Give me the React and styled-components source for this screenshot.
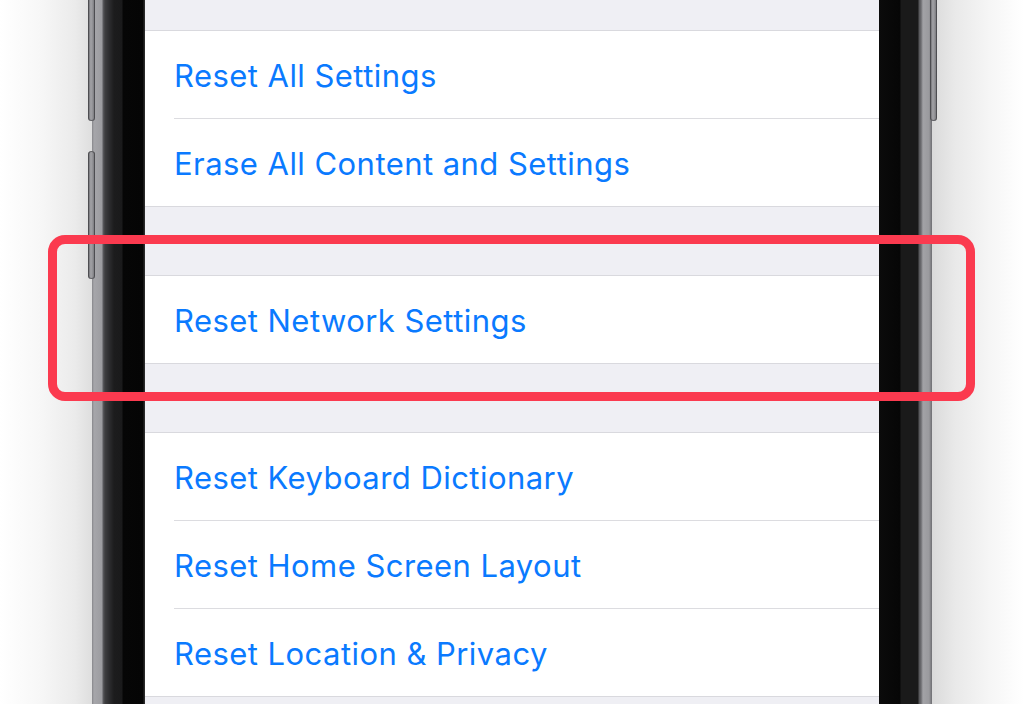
import React from "react";
import styled, { createGlobalStyle } from "styled-components";

const Global = createGlobalStyle`
  html, body { margin: 0; padding: 0; background: #ffffff; }
  body { font-family: Inter, "Noto Sans", sans-serif; }
`;

const Stage = styled.div`
  position: relative;
  width: 1024px;
  height: 704px;
  overflow: hidden;
  display: flex;
  background: linear-gradient(
    to right,
    #ffffff 0px,
    #f7f7f7 40px,
    #ebebeb 75px,
    #dedede 92px,
    #dadada 932px,
    #e9e9e9 955px,
    #f6f6f6 990px,
    #ffffff 1024px
  );
`;

const Phone = styled.div`
  position: relative;
  margin-left: 92px;
  width: 840px;
  height: 704px;
  box-sizing: border-box;
  padding: 0 53px;
  background: linear-gradient(
    to right,
    #86868a 0px,
    #a6a6aa 2px,
    #9c9ca0 10px,
    #5c5c60 11px,
    #3e3e40 13px,
    #2a2a2c 18px,
    #1c1c1d 22px,
    #1a1a1b 30px,
    #060606 31px,
    #050505 51px,
    #2a2a2a 52px,
    #2a2a2a 53px,
    #0b0b0b 787px,
    #060606 808px,
    #1a1a1a 809px,
    #1a1a1a 826px,
    #555558 827px,
    #6c6c70 829px,
    #a2a2a6 831px,
    #9a9a9e 837px,
    #6e6e72 840px
  );
`;

const SideButton = styled.div`
  position: absolute;
  width: 7px;
  top: ${(p) => p.$top}px;
  height: ${(p) => p.$height}px;
  ${(p) => (p.$side === "left" ? "left: -4px;" : "right: -5px;")}
  border-radius: ${(p) => (p.$open ? "0 0 4px 4px" : "4px")};
  background: linear-gradient(to right, #5a5a5e, #a4a4a8 40%, #8a8a8e 75%, #5a5a5e);
  box-shadow: inset 0 0 0 1px rgba(60, 60, 64, 0.6);
`;

const Screen = styled.div`
  height: 100%;
  background: #efeff4;
  display: flex;
  flex-direction: column;
  gap: 68px;
  padding-top: 30px;
  box-sizing: border-box;
`;

const Group = styled.div`
  background: #ffffff;
  border-top: 1px solid #d9d9de;
  border-bottom: 1px solid #d9d9de;
  display: flex;
  flex-direction: column;
`;

const Row = styled.div`
  height: 87px;
  display: flex;
  align-items: center;
  padding-left: 29px;
  padding-top: 2px;
  box-sizing: border-box;
  font-family: Inter, "Noto Sans", sans-serif;
  font-size: 31px;
  font-weight: 400;
  letter-spacing: 0.45px;
  color: #0a7aff;
`;

const RowDivider = styled.div`
  height: 1px;
  margin-left: 29px;
  background: #dcdce0;
`;

const Highlight = styled.div`
  position: absolute;
  left: 48px;
  top: 235px;
  width: 927px;
  height: 166px;
  box-sizing: border-box;
  border: 9px solid #fb3a4f;
  border-radius: 17px;
  pointer-events: none;
`;

const groups = [
  ["Reset All Settings", "Erase All Content and Settings"],
  ["Reset Network Settings"],
  ["Reset Keyboard Dictionary", "Reset Home Screen Layout", "Reset Location & Privacy"],
];

export default function App() {
  return (
    <>
      <Global />
      <Stage>
        <Phone>
          <SideButton $side="left" $top={-10} $height={131} $open />
          <SideButton $side="left" $top={151} $height={128} />
          <SideButton $side="right" $top={-10} $height={131} $open />
          <Screen>
            {groups.map((items, gi) => (
              <Group key={gi}>
                {items.map((label, i) => (
                  <React.Fragment key={label}>
                    {i > 0 && <RowDivider />}
                    <Row>{label}</Row>
                  </React.Fragment>
                ))}
              </Group>
            ))}
          </Screen>
        </Phone>
        <Highlight />
      </Stage>
    </>
  );
}
